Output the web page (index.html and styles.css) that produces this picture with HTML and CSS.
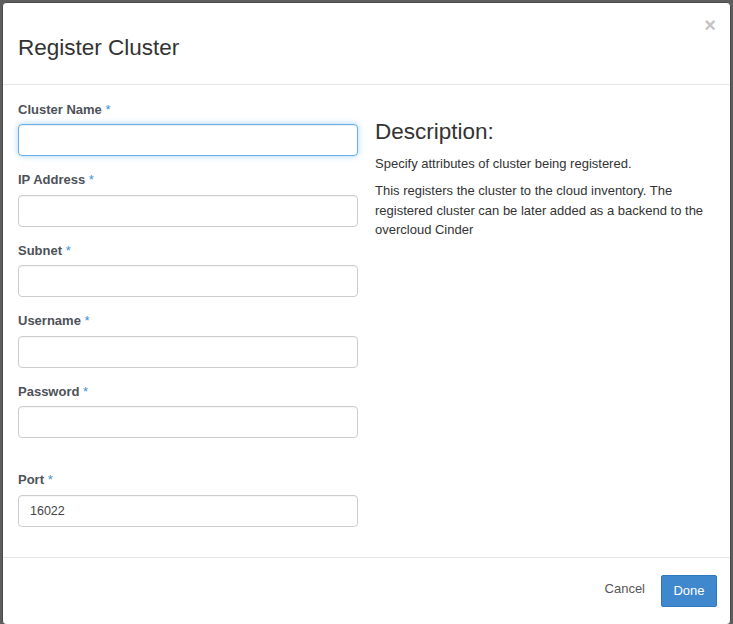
FILE: index.html
```html
<!DOCTYPE html>
<html lang="en">
<head>
<meta charset="utf-8">
<title>Register Cluster</title>
<link rel="stylesheet" href="styles.css">
</head>
<body>
<div class="modal">
  <div class="modal-header">
    <button class="close" type="button" aria-label="Close">&times;</button>
    <h4 class="modal-title">Register Cluster</h4>
  </div>
  <div class="modal-body">
    <div class="form-col">
      <div class="form-group">
        <label class="control-label">Cluster Name <span class="req">*</span></label>
        <input class="form-control focused" type="text">
      </div>
      <div class="form-group">
        <label class="control-label">IP Address <span class="req">*</span></label>
        <input class="form-control" type="text">
      </div>
      <div class="form-group">
        <label class="control-label">Subnet <span class="req">*</span></label>
        <input class="form-control" type="text">
      </div>
      <div class="form-group">
        <label class="control-label">Username <span class="req">*</span></label>
        <input class="form-control" type="text">
      </div>
      <div class="form-group">
        <label class="control-label">Password <span class="req">*</span></label>
        <input class="form-control" type="password">
      </div>
      <div class="form-group port-group">
        <label class="control-label">Port <span class="req">*</span></label>
        <input class="form-control" type="text" value="16022">
      </div>
    </div>
    <div class="desc-col">
      <h3 class="desc-title">Description:</h3>
      <p>Specify attributes of cluster being registered.</p>
      <p>This registers the cluster to the cloud inventory. The registered cluster can be later added as a backend to the overcloud Cinder</p>
    </div>
  </div>
  <div class="modal-footer">
    <button class="btn btn-cancel" type="button">Cancel</button>
    <button class="btn btn-primary" type="button">Done</button>
  </div>
</div>
</body>
</html>
```
FILE: styles.css
```css
html, body {
  margin: 0;
  height: 100%;
}
body {
  background: #5e5e5e;
  padding: 2px 2px 0 2px;
  box-sizing: border-box;
  font-family: "Liberation Sans", Arial, sans-serif;
  color: #333;
}
.modal {
  width: 729px;
  background: #fff;
  border: 1px solid #4a4a4a;
  border-radius: 4px;
  box-sizing: border-box;
}
.modal-header {
  position: relative;
  padding: 33px 15px 23px 15px;
  border-bottom: 1px solid #e5e5e5;
}
.modal-title {
  margin: 0;
  font-size: 22.5px;
  line-height: 1.1;
  font-weight: normal;
  color: #333;
}
.close {
  position: absolute;
  top: 12px;
  right: 14px;
  padding: 0;
  border: 0;
  background: transparent;
  font-family: "Liberation Sans", Arial, sans-serif;
  font-size: 20px;
  font-weight: bold;
  line-height: 1;
  color: #c4c4c4;
}
.modal-body {
  padding: 16px 15px 15px 15px;
  display: grid;
  grid-template-columns: 340px 1fr;
  column-gap: 17px;
}
.form-col {
  display: flex;
  flex-direction: column;
}
.form-group {
  display: flex;
  flex-direction: column;
  margin-bottom: 15px;
}
.port-group {
  margin-top: 18px;
}
.control-label {
  font-size: 13px;
  line-height: 18.5px;
  font-weight: bold;
  color: #4d5258;
  margin-bottom: 5px;
  padding-top: 1px;
  margin-top: -1px;
}
.req {
  color: #3f8fd6;
  font-weight: normal;
}
.form-control {
  height: 32px;
  box-sizing: border-box;
  border: 1px solid #ccc;
  border-radius: 4px;
  padding: 4px 11px;
  font-family: "Liberation Sans", Arial, sans-serif;
  font-size: 12.5px;
  color: #444;
  background: #fff;
  box-shadow: inset 0 1px 1px rgba(0, 0, 0, 0.04);
  outline: none;
}
.form-control.focused {
  border-color: #66afe9;
  box-shadow: inset 0 1px 1px rgba(0, 0, 0, 0.075), 0 0 6px rgba(102, 175, 233, 0.55);
}
.desc-col {
  font-size: 13px;
  line-height: 19.5px;
  color: #333;
}
.desc-title {
  margin: 19px 0 9px 0;
  font-size: 22.5px;
  line-height: 1.1;
  font-weight: normal;
  color: #333;
}
.desc-col p {
  margin: 0 0 8px 0;
}
.modal-footer {
  border-top: 1px solid #e5e5e5;
  padding: 15px 13px 15px 15px;
  display: flex;
  justify-content: flex-end;
  align-items: center;
  gap: 3px;
}
.btn {
  height: 32px;
  box-sizing: border-box;
  border-radius: 2px;
  font-family: "Liberation Sans", Arial, sans-serif;
  font-size: 13px;
  padding: 0 12px;
  cursor: pointer;
}
.btn-cancel {
  background: transparent;
  border: 1px solid transparent;
  color: #555;
  margin-bottom: 4px;
}
.btn-primary {
  background: #3f88cd;
  border: 1px solid #2f78be;
  color: #fff;
  width: 56px;
  padding: 0;
}
```
